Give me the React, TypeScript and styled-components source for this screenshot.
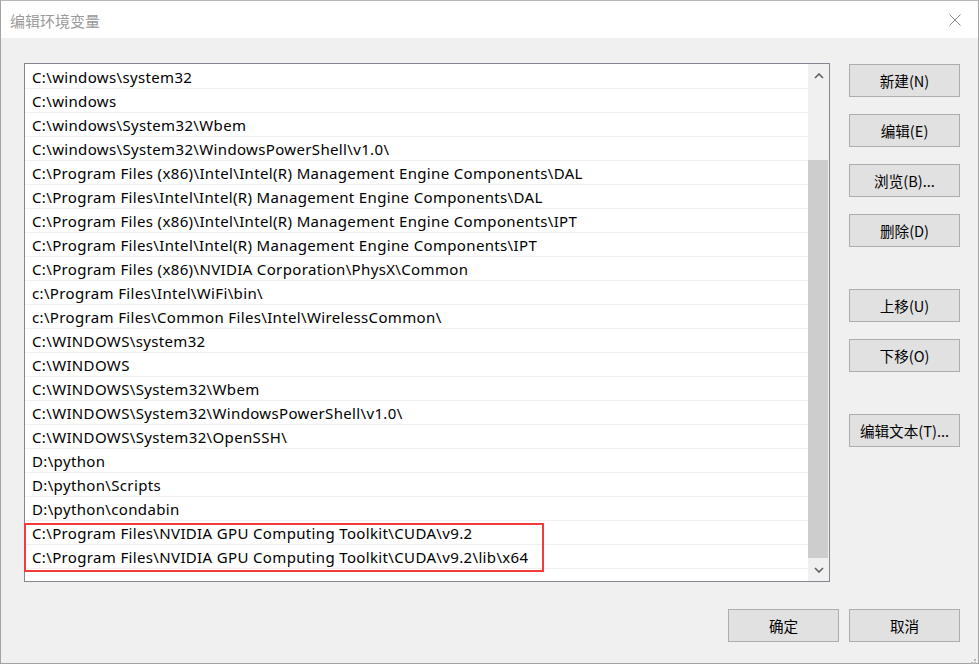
import styled, { createGlobalStyle } from 'styled-components';

const GlobalStyle = createGlobalStyle`
  html, body {
    margin: 0;
    padding: 0;
    background: #ffffff;
  }
  body {
    font-family: "Noto Sans", "Noto Sans CJK SC", sans-serif;
  }
`;

const paths = [
  'C:\\windows\\system32',
  'C:\\windows',
  'C:\\windows\\System32\\Wbem',
  'C:\\windows\\System32\\WindowsPowerShell\\v1.0\\',
  'C:\\Program Files (x86)\\Intel\\Intel(R) Management Engine Components\\DAL',
  'C:\\Program Files\\Intel\\Intel(R) Management Engine Components\\DAL',
  'C:\\Program Files (x86)\\Intel\\Intel(R) Management Engine Components\\IPT',
  'C:\\Program Files\\Intel\\Intel(R) Management Engine Components\\IPT',
  'C:\\Program Files (x86)\\NVIDIA Corporation\\PhysX\\Common',
  'c:\\Program Files\\Intel\\WiFi\\bin\\',
  'c:\\Program Files\\Common Files\\Intel\\WirelessCommon\\',
  'C:\\WINDOWS\\system32',
  'C:\\WINDOWS',
  'C:\\WINDOWS\\System32\\Wbem',
  'C:\\WINDOWS\\System32\\WindowsPowerShell\\v1.0\\',
  'C:\\WINDOWS\\System32\\OpenSSH\\',
  'D:\\python',
  'D:\\python\\Scripts',
  'D:\\python\\condabin',
  'C:\\Program Files\\NVIDIA GPU Computing Toolkit\\CUDA\\v9.2',
  'C:\\Program Files\\NVIDIA GPU Computing Toolkit\\CUDA\\v9.2\\lib\\x64',
];

// offset = space above each button in the side column
const sideButtons = [
  { label: '新建(N)', offset: 0 },
  { label: '编辑(E)', offset: 17 },
  { label: '浏览(B)...', offset: 17 },
  { label: '删除(D)', offset: 17 },
  { label: '上移(U)', offset: 42 },
  { label: '下移(O)', offset: 17 },
  { label: '编辑文本(T)...', offset: 42 },
];

const Window = styled.div`
  width: 979px;
  height: 664px;
  box-sizing: border-box;
  border: 1px solid #a3a3a3;
  border-top-color: #b9b9b9;
  background: #f0f0f0;
  display: flex;
  flex-direction: column;
  position: relative;
`;

const TitleBar = styled.div`
  height: 37px;
  background: #ffffff;
  display: flex;
  align-items: center;
  justify-content: space-between;
  padding: 0 0 0 9px;
`;

const Title = styled.span`
  font-family: "Noto Sans CJK SC", sans-serif;
  font-size: 15px;
  color: #9a9a9a;
  margin-top: 1px;
`;

const CloseButton = styled.div`
  width: 46px;
  height: 37px;
  display: flex;
  align-items: center;
  justify-content: center;
`;

const Body = styled.div`
  flex: 1;
  display: flex;
  flex-direction: column;
  padding: 25px 18px 0 23px;
`;

const Main = styled.div`
  display: flex;
  align-items: flex-start;
  gap: 19px;
`;

const ListBox = styled.div`
  position: relative;
  width: 806px;
  height: 519px;
  box-sizing: border-box;
  border: 1px solid #828790;
  background: #ffffff;
  display: flex;
`;

const Rows = styled.div`
  flex: 1;
  padding-top: 1px;
`;

const Row = styled.div`
  height: 24px;
  box-sizing: border-box;
  border-bottom: 1px solid #f0f0f0;
  padding-left: 7px;
  display: flex;
  align-items: center;
  font-family: "Noto Sans", "Noto Sans CJK SC", sans-serif;
  font-size: 15px;
  letter-spacing: 0.35px;
  color: #000000;
  white-space: nowrap;
`;

const ScrollBar = styled.div`
  width: 21px;
  background: #f0f0f0;
  display: flex;
  flex-direction: column;
`;

const Arrow = styled.div`
  height: 24px;
  display: flex;
  align-items: center;
  justify-content: center;
`;

const Track = styled.div`
  flex: 1;
  display: flex;
  flex-direction: column;
  padding: 73px 1px 0 0;
`;

const Thumb = styled.div`
  height: 398px;
  background: #cdcdcd;
`;

const Highlight = styled.div`
  position: absolute;
  left: -1px;
  top: 459px;
  width: 520px;
  height: 49px;
  box-sizing: border-box;
  border: 2px solid #f23c3c;
  pointer-events: none;
`;

const Side = styled.div`
  display: flex;
  flex-direction: column;
  padding-top: 1px;
`;

const Button = styled.button<{ $offset?: number }>`
  width: 111px;
  height: 33px;
  box-sizing: border-box;
  border: 1px solid #adadad;
  background: #e1e1e1;
  font-family: "Noto Sans CJK SC", sans-serif;
  font-size: 14.6px;
  color: #000000;
  padding: 0;
  margin: ${(p) => p.$offset ?? 0}px 0 0 0;
`;

const Footer = styled.div`
  display: flex;
  justify-content: flex-end;
  gap: 10px;
  margin-top: 27px;
`;

const Grip = styled.div`
  position: absolute;
  right: 1px;
  bottom: 1px;
  width: 11px;
  height: 11px;
`;

export default function App() {
  return (
    <>
      <GlobalStyle />
      <Window>
        <TitleBar>
          <Title>编辑环境变量</Title>
          <CloseButton>
            <svg width="12" height="12" viewBox="0 0 12 12">
              <path d="M0.5 0.5 L11.5 11.5 M11.5 0.5 L0.5 11.5" stroke="#8a8a8a" strokeWidth="1" fill="none" />
            </svg>
          </CloseButton>
        </TitleBar>
        <Body>
          <Main>
            <ListBox>
              <Rows>
                {paths.map((p, i) => (
                  <Row key={i}>{p}</Row>
                ))}
              </Rows>
              <ScrollBar>
                <Arrow>
                  <svg width="10" height="6" viewBox="0 0 10 6">
                    <path d="M1 5 L5 1 L9 5" stroke="#606060" strokeWidth="1.6" fill="none" />
                  </svg>
                </Arrow>
                <Track>
                  <Thumb />
                </Track>
                <Arrow>
                  <svg width="10" height="6" viewBox="0 0 10 6">
                    <path d="M1 1 L5 5 L9 1" stroke="#606060" strokeWidth="1.6" fill="none" />
                  </svg>
                </Arrow>
              </ScrollBar>
              <Highlight />
            </ListBox>
            <Side>
              {sideButtons.map((b) => (
                <Button key={b.label} $offset={b.offset}>
                  {b.label}
                </Button>
              ))}
            </Side>
          </Main>
          <Footer>
            <Button>确定</Button>
            <Button>取消</Button>
          </Footer>
        </Body>
        <Grip>
          <svg width="11" height="11" viewBox="0 0 11 11">
            {[
              [8, 0],
              [8, 3],
              [5, 3],
              [8, 6],
              [5, 6],
              [2, 6],
            ].map(([x, y], i) => (
              <rect key={i} x={x} y={y + 2} width="2" height="2" fill="#b8b8b8" />
            ))}
          </svg>
        </Grip>
      </Window>
    </>
  );
}
